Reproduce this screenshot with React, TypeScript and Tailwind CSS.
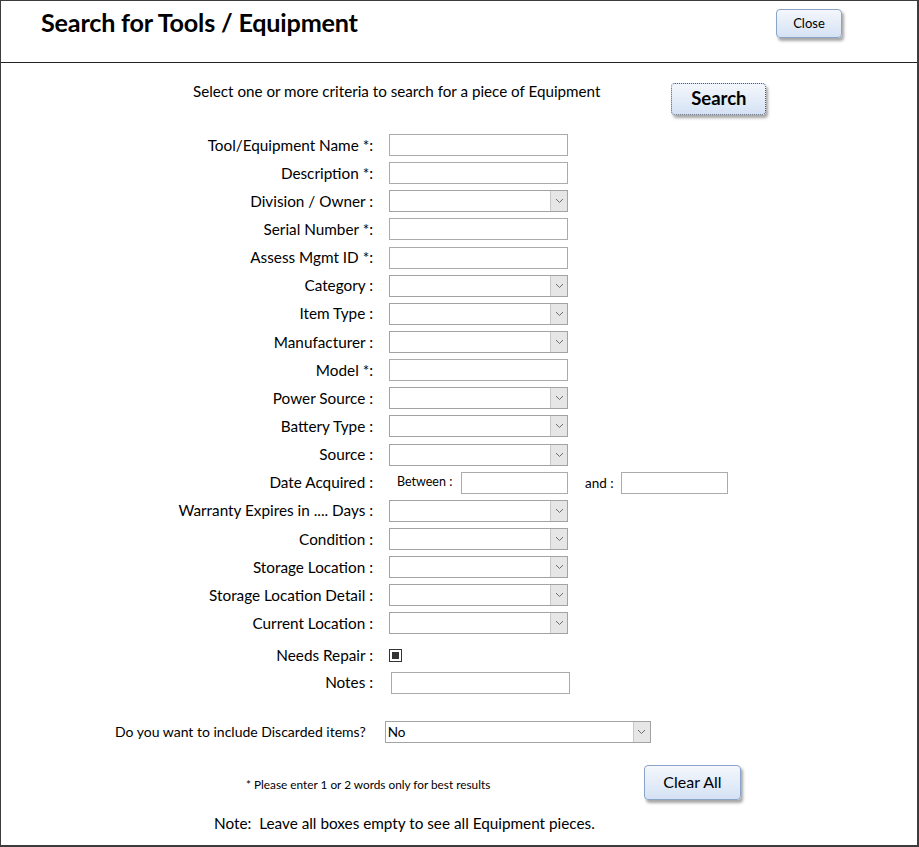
import React from "react";

type Field = { label: string; kind: "text" | "select" | "date" };

const FIELDS: Field[] = [
  { label: "Tool/Equipment Name *:", kind: "text" },
  { label: "Description *:", kind: "text" },
  { label: "Division / Owner :", kind: "select" },
  { label: "Serial Number *:", kind: "text" },
  { label: "Assess Mgmt ID *:", kind: "text" },
  { label: "Category :", kind: "select" },
  { label: "Item Type :", kind: "select" },
  { label: "Manufacturer :", kind: "select" },
  { label: "Model *:", kind: "text" },
  { label: "Power Source :", kind: "select" },
  { label: "Battery Type :", kind: "select" },
  { label: "Source :", kind: "select" },
  { label: "Date Acquired :", kind: "date" },
  { label: "Warranty Expires in .... Days :", kind: "select" },
  { label: "Condition :", kind: "select" },
  { label: "Storage Location :", kind: "select" },
  { label: "Storage Location Detail :", kind: "select" },
  { label: "Current Location :", kind: "select" },
];

function TextBox({ w = "w-[179px]" }: { w?: string }) {
  return <div className={`${w} h-[22px] border border-[#ababab] bg-white`} />;
}

function Chevron() {
  return (
    <svg width="9" height="6" viewBox="0 0 9 6" fill="none">
      <path d="M1 1l3.5 3.5L8 1" stroke="#6d6d6d" strokeWidth="1" />
    </svg>
  );
}

function SelectBox({ w = "w-[179px]", value }: { w?: string; value?: string }) {
  return (
    <div className={`${w} h-[22px] border border-[#a3a3a3] bg-white flex items-stretch`}>
      <div className="flex-1 pl-[2px] text-[13.5px] leading-[20px] text-black">{value}</div>
      <div className="w-[17px] bg-[#e6e6e6] border-l border-[#c8c8c8] flex items-center justify-center">
        <Chevron />
      </div>
    </div>
  );
}

function Btn({ children, className }: { children: React.ReactNode; className: string }) {
  return (
    <button
      className={`rounded-[4px] border border-[#8aa4c8] bg-gradient-to-b from-[#f4f7fc] to-[#d5e2f4] shadow-[2px_3px_3px_rgba(0,0,0,0.35)] text-black ${className}`}
    >
      {children}
    </button>
  );
}

export default function App() {
  return (
    <div
      className="w-[919px] h-[847px] bg-white border-l border-t border-r-2 border-b-2 border-[#3c3c3c] text-black"
      style={{ fontFamily: "Lato, 'Open Sans', sans-serif" }}
    >
      {/* header */}
      <div className="h-[62px] border-b border-[#222] flex items-start">
        <h1 className="ml-[40px] mt-[3px] text-[25.2px] font-bold tracking-[-0.2px]">
          Search for Tools / Equipment
        </h1>
        <Btn className="ml-auto mr-[75px] mt-[8px] w-[66px] h-[29px] text-[13px]">Close</Btn>
      </div>

      {/* criteria line */}
      <div className="flex items-start h-[68px]">
        <div className="ml-[192px] mt-[17px] text-[15.2px]">
          Select one or more criteria to search for a piece of Equipment
        </div>
        <button className="ml-[71px] mt-[20px] w-[95px] h-[32px] rounded-[4px] border border-dotted border-[#4a5a78] bg-gradient-to-b from-[#f4f7fc] to-[#d5e2f4] shadow-[2px_3px_3px_rgba(0,0,0,0.35)] text-[18.5px] font-bold">
          Search
        </button>
      </div>

      {/* fields */}
      <div className="flex flex-col">
        {FIELDS.map((f) => (
          <div key={f.label} className="h-[28.15px] flex items-center">
            <div className="w-[372px] text-right text-[15.3px] whitespace-nowrap">{f.label}</div>
            <div className="ml-[16px] flex items-center">
              {f.kind === "text" && <TextBox />}
              {f.kind === "select" && <SelectBox />}
              {f.kind === "date" && (
                <>
                  <span className="ml-[8px] text-[12.5px] w-[64px]">Between :</span>
                  <TextBox w="w-[107px]" />
                  <span className="ml-[17px] text-[13.5px] w-[36px]">and :</span>
                  <TextBox w="w-[107px]" />
                </>
              )}
            </div>
          </div>
        ))}

        <div className="h-[28px] mt-[4px] flex items-center">
          <div className="w-[372px] text-right text-[15.3px]">Needs Repair :</div>
          <div className="ml-[16px] w-[13px] h-[13px] border border-[#333] bg-white flex items-center justify-center">
            <div className="w-[7px] h-[7px] bg-[#333]" />
          </div>
        </div>
        <div className="h-[26px] flex items-center">
          <div className="w-[372px] text-right text-[15.3px]">Notes :</div>
          <div className="ml-[18px]">
            <TextBox />
          </div>
        </div>

        <div className="h-[30px] mt-[21px] flex items-center">
          <div className="ml-[114px] text-[14px]">Do you want to include Discarded items?</div>
          <div className="ml-[19px]">
            <SelectBox w="w-[266px]" value="No" />
          </div>
        </div>

        <div className="flex items-start mt-[18px]">
          <div className="ml-[245px] mt-[11px] text-[11.8px]">* Please enter 1 or 2 words only for best results</div>
          <Btn className="ml-auto mr-[176px] w-[97px] h-[35px] text-[16px]">Clear All</Btn>
        </div>

        <div className="mt-[12px] ml-[213px] text-[15.3px] whitespace-pre">
          Note:  Leave all boxes empty to see all Equipment pieces.
        </div>
      </div>
    </div>
  );
}
